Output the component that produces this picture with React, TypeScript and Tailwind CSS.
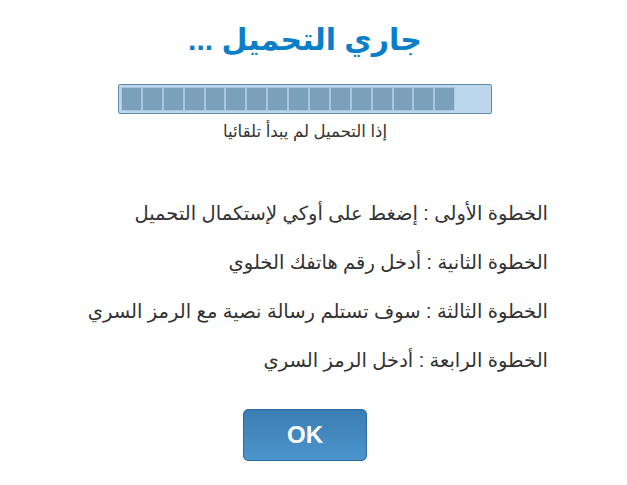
import React from 'react';

const steps = [
  'الخطوة الأولى : إضغط على أوكي لإستكمال التحميل',
  'الخطوة الثانية : أدخل رقم هاتفك الخلوي',
  'الخطوة الثالثة : سوف تستلم رسالة نصية مع الرمز السري',
  'الخطوة الرابعة : أدخل الرمز السري',
];

export default function App() {
  const segments = Array.from({ length: 16 });

  return (
    <div
      dir="rtl"
      className="w-[627px] h-[485px] bg-white pr-[17px]"
      style={{ fontFamily: '"Liberation Sans", Arial, "DejaVu Sans", sans-serif' }}
    >
      <div className="flex flex-col items-center">
        <h1 className="mt-[18px] text-[30px] leading-[44px] font-bold text-[#0a7fc9]">جاري التحميل ...</h1>

        <div className="mt-[22px] w-[374px] h-[30px] rounded-[2px] border border-[#5f8aab] bg-[#bdd7ed] p-[2px] flex" dir="ltr">
          {segments.map((_, i) => (
            <div key={i} className="w-[20.9px] h-full bg-[#7aa0bb] border border-[#a9c8e0]" />
          ))}
        </div>

        <p className="mt-[6px] text-[16.5px] leading-[22px] text-[#333]">إذا التحميل لم يبدأ تلقائيا</p>

        <div className="self-stretch mt-[58px] pr-[62px] flex flex-col gap-[23px] text-[19.5px] leading-[26px] text-[#333]">
          {steps.map((s) => (
            <p key={s}>{s}</p>
          ))}
        </div>

        <button className="mt-[36px] w-[124px] h-[52px] rounded-[5px] border border-[#2c6a9e] bg-gradient-to-b from-[#3a7db3] to-[#4b95cd] text-white text-[24px] font-bold">
          OK
        </button>
      </div>
    </div>
  );
}
